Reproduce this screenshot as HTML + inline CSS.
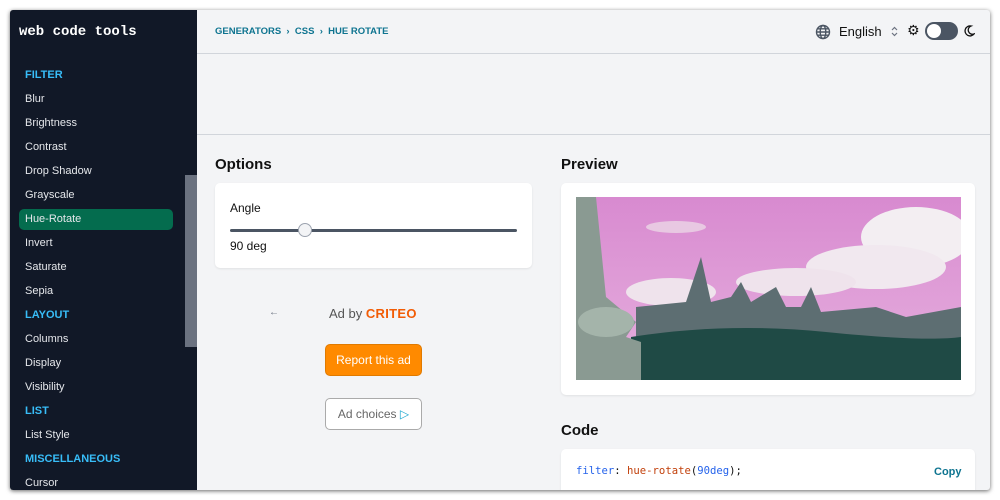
<!DOCTYPE html>
<html><head><meta charset="utf-8"><style>
*{box-sizing:border-box;margin:0;padding:0}
body{width:1000px;height:500px;background:#fff;position:relative;overflow:hidden;font-family:"Liberation Sans","DejaVu Sans",sans-serif;}
.win{position:absolute;left:10px;top:10px;width:980px;height:480px;background:#f3f4f6;overflow:hidden;box-shadow:0 1px 4px rgba(0,0,0,.6);border-radius:3px}
.side{position:absolute;left:0;top:0;width:187px;height:480px;background:#111827}
.logo{position:absolute;left:9px;top:14px;color:#fff;font-family:"Liberation Mono",monospace;font-weight:bold;font-size:14px}
.it{position:absolute;left:15px;color:#e5e7eb;font-size:11px}
.hd{position:absolute;left:15px;color:#38bdf8;font-size:11px;font-weight:bold}
.sel{position:absolute;left:9px;top:199px;width:154px;height:21px;background:#046c4e;border-radius:5px}
.thumb{position:absolute;left:175px;top:165px;width:12px;height:172px;background:#6b7280}
.abs{position:absolute}
.card{position:absolute;background:#fff;border-radius:5px;box-shadow:0 1px 2px rgba(0,0,0,.08)}
</style></head><body>
<div class="win">
<div class="side">
<div class="logo">web code tools</div>
<div class="sel"></div>
<div class="hd" style="top:59px">FILTER</div>
<div class="it" style="top:83px">Blur</div>
<div class="it" style="top:107px">Brightness</div>
<div class="it" style="top:131px">Contrast</div>
<div class="it" style="top:155px">Drop Shadow</div>
<div class="it" style="top:179px">Grayscale</div>
<div class="it" style="top:203px">Hue-Rotate</div>
<div class="it" style="top:227px">Invert</div>
<div class="it" style="top:251px">Saturate</div>
<div class="it" style="top:275px">Sepia</div>
<div class="hd" style="top:299px">LAYOUT</div>
<div class="it" style="top:323px">Columns</div>
<div class="it" style="top:347px">Display</div>
<div class="it" style="top:371px">Visibility</div>
<div class="hd" style="top:395px">LIST</div>
<div class="it" style="top:419px">List Style</div>
<div class="hd" style="top:443px">MISCELLANEOUS</div>
<div class="it" style="top:467px">Cursor</div>
<div class="thumb"></div>
</div>
<div class="abs" style="left:187px;top:43px;width:793px;height:1px;background:#d1d5db"></div>
<div class="abs" style="left:187px;top:124px;width:793px;height:1px;background:#d1d5db"></div>
<div class="abs" style="left:205px;top:16px;font-size:9.5px;color:#0e7490;font-weight:bold">GENERATORS &nbsp;›&nbsp; CSS &nbsp;›&nbsp; HUE ROTATE</div>
<svg class="abs" style="left:805px;top:14px" width="16" height="16" viewBox="0 0 16 16" fill="none" stroke="#4b5563" stroke-width="1.4"><circle cx="8" cy="8" r="6.5"/><ellipse cx="8" cy="8" rx="2.8" ry="6.5"/><path d="M1.5 8h13M2.5 4.8h11M2.5 11.2h11"/></svg>
<div class="abs" style="left:829px;top:14px;font-size:13px;color:#111">English</div>
<svg class="abs" style="left:881px;top:16px" width="7" height="11" viewBox="0 0 7 11" fill="none" stroke="#6b7280" stroke-width="1.2"><path d="M1 4l2.5-2.5L6 4M1 7l2.5 2.5L6 7"/></svg>
<div class="abs" style="left:897px;top:12px;font-size:14px;color:#111">⚙</div>
<div class="abs" style="left:915px;top:12px;width:33px;height:18px;border-radius:9px;background:#4b5563"></div>
<div class="abs" style="left:917px;top:14px;width:14px;height:14px;border-radius:7px;background:#fff"></div>
<svg class="abs" style="left:953px;top:15px" width="12" height="12" viewBox="0 0 12 12"><path d="M8 1A5 5 0 1 0 11 9 4.2 4.2 0 0 1 8 1z" fill="none" stroke="#111" stroke-width="1.3"/></svg>

<div class="abs" style="left:205px;top:146px;font-size:15px;font-weight:bold;color:#111">Options</div>
<div class="card" style="left:205px;top:173px;width:317px;height:85px">
<div class="abs" style="left:15px;top:18px;font-size:12px;color:#111">Angle</div>
<div class="abs" style="left:15px;top:46px;width:287px;height:3px;background:#4b5563;border-radius:2px"></div>
<div class="abs" style="left:83px;top:40px;width:14px;height:14px;border-radius:7px;background:#f3f4f6;border:1px solid #9ca3af"></div>
<div class="abs" style="left:15px;top:56px;font-size:12px;color:#111">90 deg</div>
</div>
<div class="abs" style="left:259px;top:297px;font-size:10px;color:#6b7280">←</div>
<div class="abs" style="left:319px;top:296px;font-size:13px;color:#555">Ad by <b style="color:#f25c05;letter-spacing:.3px">CRITEO</b></div>
<div class="abs" style="left:315px;top:334px;width:97px;height:32px;background:#ff8a00;border-radius:5px;color:#fff;font-size:12px;text-align:center;line-height:30px;border:1px solid #e07a00">Report this ad</div>
<div class="abs" style="left:315px;top:388px;width:97px;height:32px;background:#fff;border-radius:5px;color:#666;font-size:12px;text-align:center;line-height:30px;border:1px solid #aaa">Ad choices <span style="color:#1ba6cf">▷</span></div>

<div class="abs" style="left:551px;top:146px;font-size:15px;font-weight:bold;color:#111">Preview</div>
<div class="card" style="left:551px;top:173px;width:414px;height:212px">
<svg class="abs" style="left:15px;top:14px" width="385" height="183" viewBox="0 0 385 183">
<defs><linearGradient id="s" x1="0" y1="0" x2="0" y2="1"><stop offset="0" stop-color="#d88ad0"/><stop offset="1" stop-color="#e6b0de"/></linearGradient></defs>
<rect width="385" height="183" fill="url(#s)"/>
<ellipse cx="340" cy="40" rx="55" ry="30" fill="#f3eef2"/><ellipse cx="300" cy="70" rx="70" ry="22" fill="#f1e8ef"/><ellipse cx="220" cy="85" rx="60" ry="14" fill="#efe3ec"/><ellipse cx="95" cy="95" rx="45" ry="14" fill="#efe3ec"/><ellipse cx="100" cy="30" rx="30" ry="6" fill="#e8c8e2"/>
<path d="M60 130 L60 110 L110 105 L125 60 L135 105 L155 100 L165 85 L175 105 L200 90 L210 110 L225 110 L235 90 L245 115 L300 110 L330 120 L385 110 L385 150 L60 150Z" fill="#5d6e72"/>
<path d="M55 140 Q150 125 250 135 T385 140 L385 183 L55 183Z" fill="#1f4a45"/>
<path d="M0 0 L20 0 L30 100 L60 125 L50 140 L65 145 L65 183 L0 183Z" fill="#8a9a92"/>
<ellipse cx="30" cy="125" rx="28" ry="15" fill="#a4b4aa"/>
</svg>
</div>
<div class="abs" style="left:551px;top:412px;font-size:15px;font-weight:bold;color:#111">Code</div>
<div class="card" style="left:551px;top:439px;width:414px;height:50px">
<div class="abs" style="left:15px;top:16px;font-family:'DejaVu Sans Mono',monospace;font-size:10.6px;color:#111"><span style="color:#2563eb">filter</span>: <span style="color:#c2410c">hue-rotate</span>(<span style="color:#2563eb">90deg</span>);</div>
<div class="abs" style="left:373px;top:17px;font-size:11px;font-weight:bold;color:#0e7490">Copy</div>
</div>
</div>
</body></html>
